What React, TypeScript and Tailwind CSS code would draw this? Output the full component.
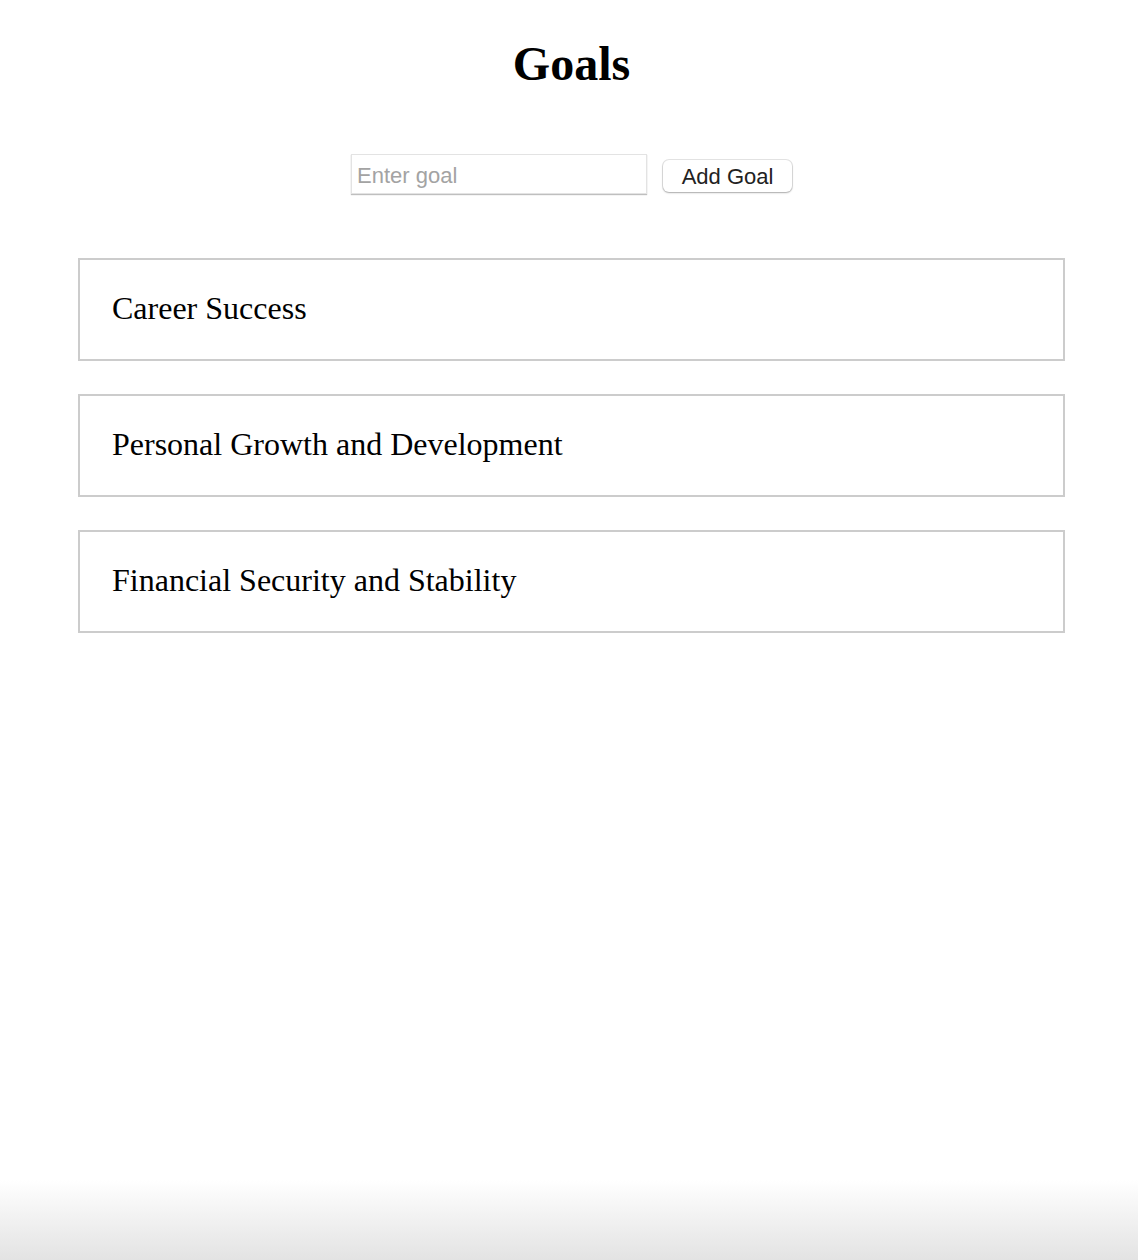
import { useState } from "react";

const initialGoals = [
  "Career Success",
  "Personal Growth and Development",
  "Financial Security and Stability",
];

export default function App() {
  const [goals, setGoals] = useState<string[]>(initialGoals);
  const [text, setText] = useState("");

  const addGoal = () => {
    if (!text.trim()) return;
    setGoals([...goals, text.trim()]);
    setText("");
  };

  return (
    <div className="flex min-h-[1260px] flex-col bg-white font-['Liberation_Serif',serif] text-black">
      <main className="flex-1 pl-[78px] pr-[73px]">
        <h1 className="mt-[33px] text-center text-[48px] font-bold leading-[62px]">Goals</h1>

        <div className="mt-[59px] flex items-center justify-center gap-4 font-['Liberation_Sans',Arial,sans-serif]">
          <input
            value={text}
            onChange={(e) => setText(e.target.value)}
            placeholder="Enter goal"
            className="h-[40px] w-[296px] border border-[#e3e3e3] px-[5px] pt-[4px] text-[22px] text-black shadow-[0_1px_1px_rgba(0,0,0,0.25)] outline-none placeholder:text-[#a3a3a3]"
          />
          <button
            onClick={addGoal}
            className="mt-[4px] h-[32px] w-[129px] rounded-[6px] bg-white text-[22px] text-[#222] shadow-[0_0_0_1px_rgba(0,0,0,0.1),0_1px_2px_rgba(0,0,0,0.25)]"
          >
            Add Goal
          </button>
        </div>

        <ul className="mt-[64px] flex flex-col gap-[33px]">
          {goals.map((goal) => (
            <li
              key={goal}
              className="flex h-[103px] items-center border-2 border-[#cccccc] px-[32px] pb-[3px] text-[32px]"
            >
              {goal}
            </li>
          ))}
        </ul>
      </main>
      <div className="h-[80px] bg-gradient-to-b from-white to-[#e3e3e3]" />
    </div>
  );
}
